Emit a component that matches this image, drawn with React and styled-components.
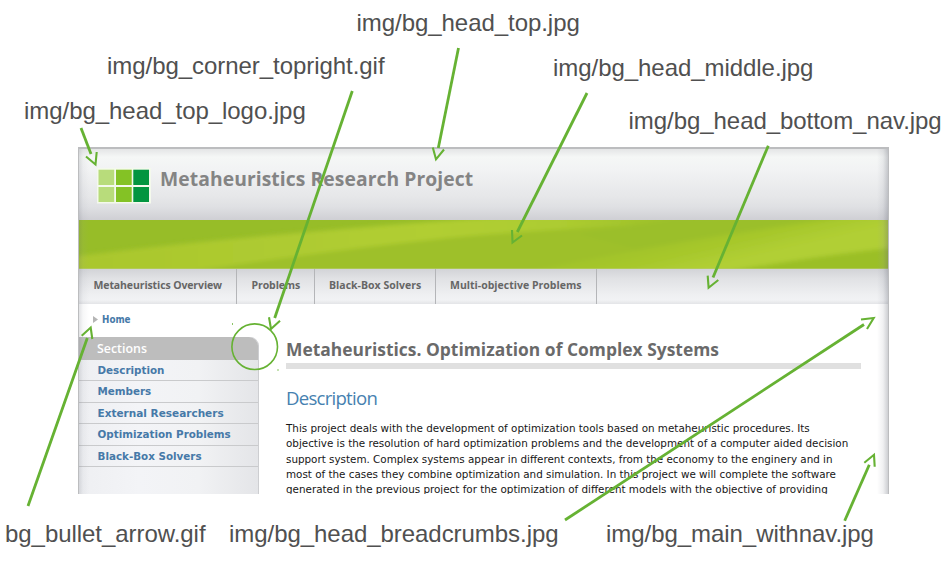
import React from 'react';
import styled, { createGlobalStyle } from 'styled-components';

const GlobalStyle = createGlobalStyle`
  * { box-sizing: border-box; }
  body { margin: 0; background: #fff; overflow: hidden; }
`;

const heading = '"Open Sans", "Noto Sans", sans-serif';
const body = '"DejaVu Sans", sans-serif';

const Canvas = styled.main`
  position: relative;
  width: 948px;
  height: 563px;
  padding: 147px 59px 0 78px;
  overflow: hidden;
`;

const Site = styled.div`
  position: relative;
  display: flex;
  flex-direction: column;
  height: 347px;
  width: 811px;
  overflow: hidden;
  border: solid #bcbdbf;
  border-width: 2px 1px 0;
`;

const EdgeShade = styled.div`
  position: absolute;
  inset: 0;
  pointer-events: none;
  background:
    linear-gradient(to right, rgba(110, 114, 125, 0.2), rgba(150, 154, 165, 0.08) 4px, transparent 10px),
    linear-gradient(to left, rgba(110, 114, 125, 0.34), rgba(150, 154, 165, 0.14) 5px, transparent 11px);
`;

const Top = styled.header`
  display: flex;
  align-items: flex-start;
  flex: none;
  height: 71px;
  padding: 19px 0 0 18px;
  gap: 9px;
  background: linear-gradient(#e4e5e6, #f5f7f6 8px, #f2f3f4 20px, #e6e7e9 48px, #dfe0e3 58px, #cfcfd4);
`;

const LogoMark = styled.svg`
  display: block;
  flex: none;
  width: 54px;
  height: 36px;
`;

const SiteTitle = styled.h1`
  margin: 0;
  font: 700 19.3px/22px ${heading};
  letter-spacing: 0.08px;
  color: #848484;
  white-space: nowrap;
`;

const Band = styled.svg`
  display: block;
  flex: none;
  width: 809px;
  height: 49px;
`;

const Nav = styled.nav`
  display: flex;
  flex: none;
  height: 35px;
  background: linear-gradient(#d2d3d7, #e0e1e4 9px, #eeeff1 25px, #f1f2f4 31px, #e3e4e7);
`;

const NavItem = styled.a`
  width: ${(p) => p.$width}px;
  padding-left: ${(p) => p.$inset}px;
  border-right: 1px solid #b4b5b8;
  font: 700 ${(p) => p.$size}px/33px ${heading};
  letter-spacing: ${(p) => p.$tracking}px;
  color: #666;
  white-space: nowrap;
`;

const Breadcrumbs = styled.div`
  display: flex;
  align-items: center;
  gap: 4px;
  flex: none;
  height: 33px;
  padding: 0 0 2px 14px;
  font: 700 9.8px/12px "DejaVu Sans Condensed", "DejaVu Sans", sans-serif;
  color: #4679a8;
`;

const Bullet = styled.svg`
  width: 5px;
  height: 7px;
  fill: #b5b5b5;
`;

const Columns = styled.div`
  display: grid;
  grid-template-columns: 180px 1fr;
  flex: 1;
  min-height: 0;
`;

const Sidebar = styled.aside`
  border-right: 1px solid #cdced1;
  border-top-right-radius: 9px;
  background: linear-gradient(to right, #eeeff2, #f3f4f7 60px, #f1f2f4 120px, #e4e5e8);
`;

const SectionsTitle = styled.h2`
  margin: 0;
  height: 22.7px;
  padding-left: 18px;
  border-top-right-radius: 9px;
  background: #bdbdbd;
  color: #fff;
  font: 600 12.4px/23px ${heading};
`;

const SectionLink = styled.a`
  display: block;
  height: 21.5px;
  padding-left: 18.5px;
  border-bottom: 1px solid #c9cacc;
  font: 700 ${(p) => p.$size || 10.35}px/21.4px ${body};
  color: #4679a8;
  white-space: nowrap;
`;

const Article = styled.article`
  padding: 0 27px 0 27px;
  color: #161616;
  font: 10.37px/15.33px ${body};
`;

const PageTitle = styled.h1`
  margin: 0;
  height: 32px;
  border-bottom: 6px solid #e0e0e0;
  font: 700 17.4px/25px ${heading};
  letter-spacing: 0.02px;
  color: #6a6a6a;
  white-space: nowrap;
`;

const Subtitle = styled.h2`
  margin: 16px 0 10px;
  font: 400 18.6px/26px ${heading};
  letter-spacing: -0.75px;
  color: #4681b0;
`;

const Line = styled.div`
  white-space: nowrap;
`;

const FileLabel = styled.span`
  position: absolute;
  left: ${(p) => p.$x}px;
  top: ${(p) => p.$y}px;
  font: 24px/28px "Liberation Sans", sans-serif;
  letter-spacing: -0.05px;
  color: #505050;
  white-space: nowrap;
`;

const Arrows = styled.svg`
  position: absolute;
  left: 0;
  top: 0;
  fill: none;
  stroke: #66b233;
  pointer-events: none;
`;

const labels = [
  ['img/bg_head_top.jpg', 356.5, 9],
  ['img/bg_corner_topright.gif', 107, 52],
  ['img/bg_head_middle.jpg', 553, 54],
  ['img/bg_head_top_logo.jpg', 24, 97],
  ['img/bg_head_bottom_nav.jpg', 628.5, 107],
  ['bg_bullet_arrow.gif', 5, 520],
  ['img/bg_head_breadcrumbs.jpg', 229, 520],
  ['img/bg_main_withnav.jpg', 606, 520],
];

const arrows = [
  ['M81 128 91 154', 'M86 156.5 95.5 164.5 96.7 152'],
  ['M352.3 91 274.7 318', 'M269 317.3 271 329 280 320.7'],
  ['M458.5 48 438.3 148', 'M432.8 147.5 436 159.3 444 149.5'],
  ['M587 93 517.3 232', 'M512 230 512.5 242.5 522 235.5'],
  ['M768.3 145.7 713 277.5', 'M707.7 275.7 708.6 287.7 718.3 280'],
  ['M565 520 864 324.5', 'M861 319.5 873.7 318 867 329'],
  ['M28 506 87.3 338', 'M81.7 335.7 90.7 327.5 92.3 339'],
  ['M844.7 520.7 869.3 464.7', 'M864.3 462.7 874 454.8 874.7 466.7'],
];

const logoCells = [
  [1.5, '#b8dc7b'],
  [19, '#84c225'],
  [36.3, '#029540'],
];

const navItems = [
  ['Metaheuristics Overview', 158, 14.5, 10.5, -0.11],
  ['Problems', 78, 14.5, 10.5, -0.09],
  ['Black-Box Solvers', 121, 14, 10.5, 0.02],
  ['Multi-objective Problems', 161, 14, 10.5, 0.01],
];

const sections = ['Description', 'Members', 'External Researchers', 'Optimization Problems', 'Black-Box Solvers'];

const paragraph = [
  'This project deals with the development of optimization tools based on metaheuristic procedures. Its',
  'objective is the resolution of hard optimization problems and the development of a computer aided decision',
  'support system. Complex systems appear in different contexts, from the economy to the enginery and in',
  'most of the cases they combine optimization and simulation. In this project we will complete the software',
  'generated in the previous project for the optimization of different models with the objective of providing',
];

function Logo() {
  return (
    <LogoMark viewBox="0 0 54 36">
      <rect width="54" height="35.5" fill="#f4f9ec" />
      {logoCells.map(([x, color]) => (
        <g key={x} fill={color}>
          <rect x={x} y="1.7" width="15.7" height="15.3" />
          <rect x={x} y="19" width="15.7" height="15" />
        </g>
      ))}
    </LogoMark>
  );
}

function GreenBand() {
  return (
    <Band viewBox="0 0 809 49">
      <defs>
        <filter id="soft" x="-5%" y="-20%" width="110%" height="140%">
          <feGaussianBlur stdDeviation="2" />
        </filter>
        <linearGradient id="light" gradientUnits="userSpaceOnUse" x1="0" x2="640" y1="0" y2="0">
          <stop offset="0" stopColor="#aac72e" />
          <stop offset="0.55" stopColor="#b1ce32" />
          <stop offset="0.75" stopColor="#adcc30" />
          <stop offset="0.95" stopColor="#9bbf29" />
        </linearGradient>
        <linearGradient id="glow" gradientUnits="userSpaceOnUse" x1="610" y1="6" x2="620" y2="49">
          <stop offset="0" stopColor="#9fc129" />
          <stop offset="0.6" stopColor="#a7c82c" />
          <stop offset="1" stopColor="#b1cf34" />
        </linearGradient>
      </defs>
      <rect x="0" width="809" height="49" fill="#97bd28" />
      <g filter="url(#soft)">
        <path d="M100 25Q230 8 410 1L380 6Q230 14 100 30Z" fill="#87ae20" />
        <path d="M-8 37Q160 15 420 -3H660Q520 6 370 26L120 55H-8Z" fill="url(#light)" />
        <path d="M90 55Q250 30 380 17Q500 7 610 3L815 -4V55Z" fill="#9ec02a" />
        <path d="M500 14Q560 2 640 -4H815V4L560 30Z" fill="#9bbf29" />
        <path d="M430 55Q540 32 640 16L770 -4H815V55Z" fill="url(#glow)" />
        <path d="M630 55Q720 38 820 27V55Z" fill="#9bbf28" />
      </g>
      <path d="M0 48.5H809" stroke="#b8cc70" opacity=".6" />
    </Band>
  );
}

export default function App() {
  return (
    <Canvas>
      <GlobalStyle />
      <Site>
        <Top>
          <Logo />
          <SiteTitle>Metaheuristics Research Project</SiteTitle>
        </Top>
        <GreenBand />
        <Nav>
          {navItems.map(([text, width, inset, size, tracking]) => (
            <NavItem key={text} $width={width} $inset={inset} $size={size} $tracking={tracking}>
              {text}
            </NavItem>
          ))}
        </Nav>
        <Breadcrumbs>
          <Bullet viewBox="0 0 5 7"><path d="M0 0 5 3.5 0 7Z" /></Bullet>
          Home
        </Breadcrumbs>
        <Columns>
          <Sidebar>
            <SectionsTitle>Sections</SectionsTitle>
            {sections.map((text) => (
              <SectionLink key={text} $size={text === 'External Researchers' ? 10.5 : undefined}>{text}</SectionLink>
            ))}
          </Sidebar>
          <Article>
            <PageTitle>Metaheuristics. Optimization of Complex Systems</PageTitle>
            <Subtitle>Description</Subtitle>
            {paragraph.map((text) => <Line key={text}>{text}</Line>)}
          </Article>
        </Columns>
        <EdgeShade />
      </Site>
      {labels.map(([text, x, y]) => <FileLabel key={text} $x={x} $y={y}>{text}</FileLabel>)}
      <Arrows width="948" height="563" viewBox="0 0 948 563">
        {arrows.map(([shaft, head]) => (
          <g key={shaft}>
            <path d={shaft} strokeWidth="2.8" />
            <path d={head} strokeWidth="2.1" />
          </g>
        ))}
        <circle cx="254.7" cy="346.7" r="22.8" strokeWidth="1.6" />
        <path d="M232 324h1M277.5 370h1" strokeWidth="1.5" />
      </Arrows>
    </Canvas>
  );
}
